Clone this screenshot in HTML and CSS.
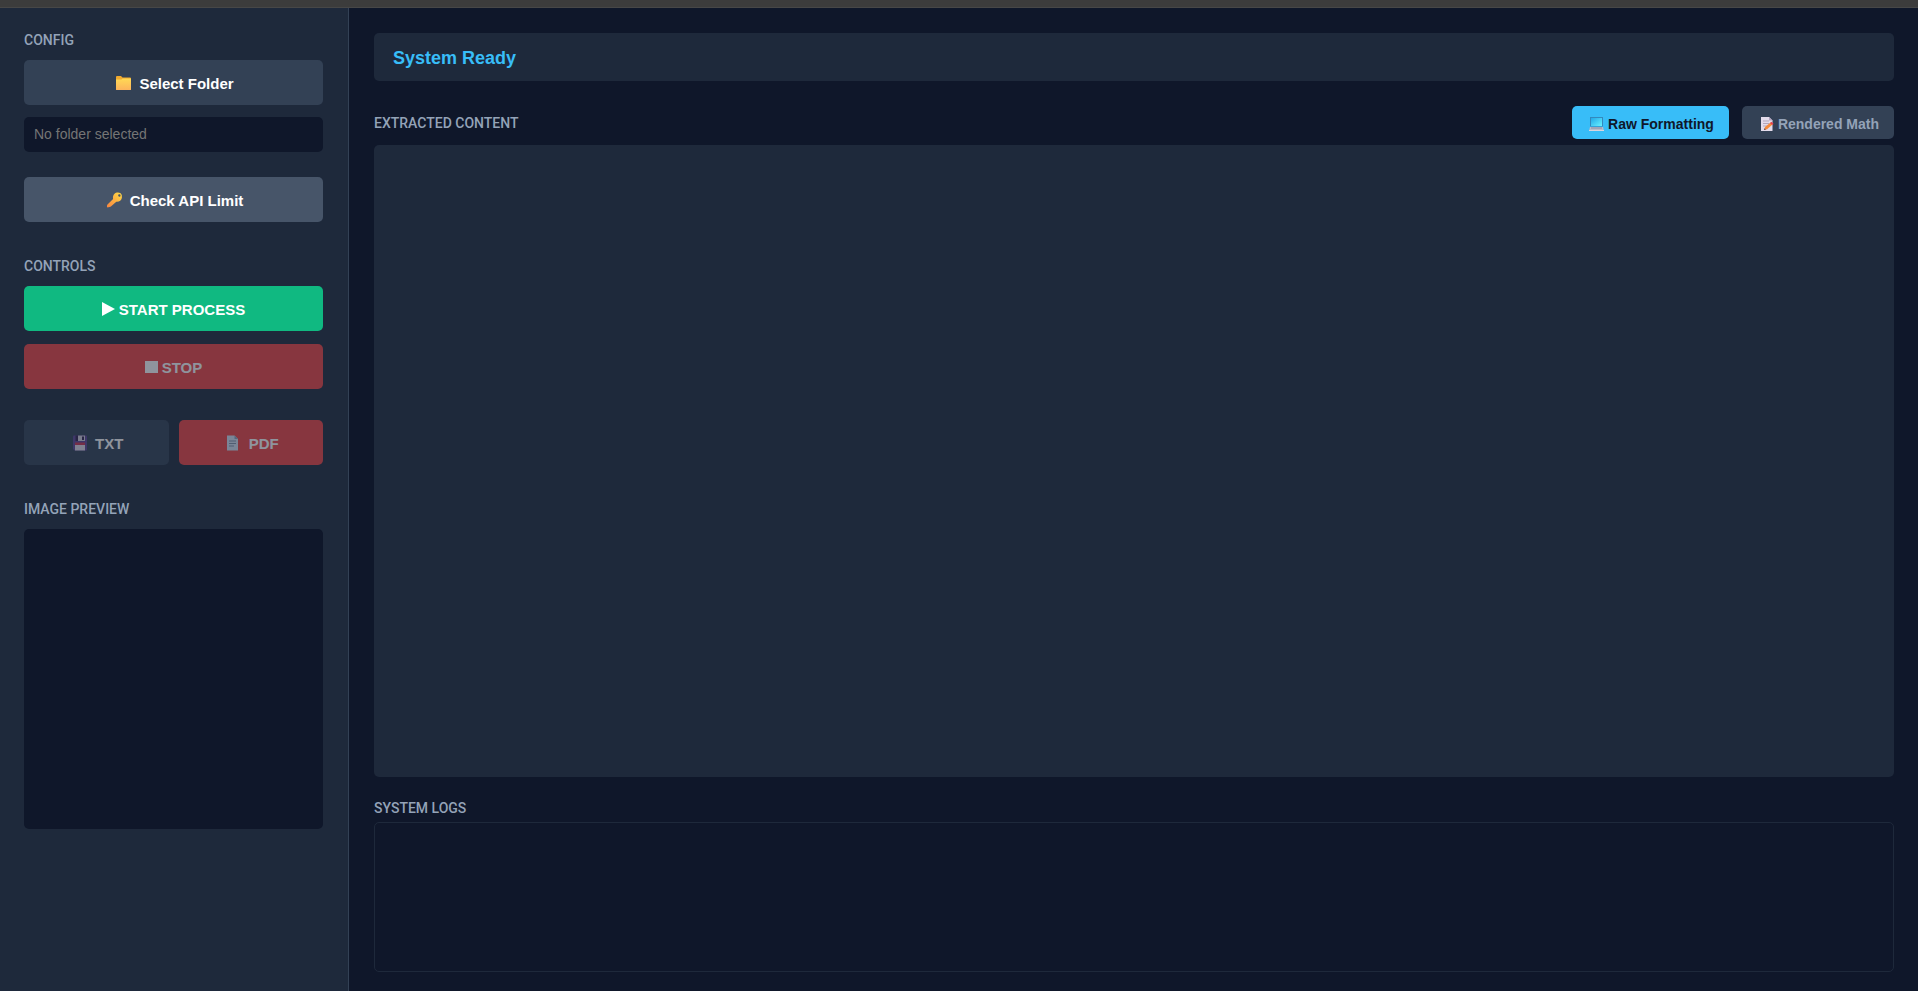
FILE: index.html
```html
<!DOCTYPE html>
<html lang="en">
<head>
    <meta charset="UTF-8">
    <meta name="viewport" content="width=device-width, initial-scale=1.0">
    <title>Text Extractor</title>
    <link rel="stylesheet" href="styles.css">
</head>
<body>
    <div class="top-strip"></div>
    <div class="app">
        <aside class="sidebar">
            <section class="group">
                <label class="label" for="folderPath">CONFIG</label>
                <button type="button" class="btn btn-folder">
                    <svg class="icon" viewBox="0 0 22 16" aria-hidden="true">
                        <defs>
                            <linearGradient id="folderFill" x1="0" y1="0" x2="0" y2="1">
                                <stop offset="0" stop-color="#ffd954"/>
                                <stop offset="1" stop-color="#fcb35c"/>
                            </linearGradient>
                        </defs>
                        <path d="M3 2a1 1 0 0 1 1-1h4l1.500 1.500H17a1 1 0 0 1 1 1V8H3z" fill="#f0a92f"/>
                        <path d="M3 4.500h5.500l1-1H18v11a.6.6 0 0 1-.6.6H3.600a.6.6 0 0 1-.6-.6z" fill="url(#folderFill)"/>
                    </svg>
                    Select Folder
                </button>
                <input type="text" id="folderPath" class="path-input" placeholder="No folder selected" readonly>
                <button type="button" class="btn btn-check">
                    <svg class="icon" viewBox="0 0 22 16" aria-hidden="true">
                        <defs>
                            <linearGradient id="keyFill" x1="1" y1="0" x2="0" y2="1">
                                <stop offset="0" stop-color="#ffdc45"/>
                                <stop offset="1" stop-color="#f9843f"/>
                            </linearGradient>
                        </defs>
                        <path fill-rule="evenodd" d="M13 .5a5 5 0 0 1 3.600.8 4.200 4.200 0 0 1 1.300 4.500c-.6 2.700-2.700 4.200-5.600 3.900L6.900 14.500c-.5.5-3.400 1.200-3.700.8-.4-.5-.2-2.200.3-2.700L9.100 7C8.500 3.800 10 1.200 13 .5zM15.300 2.300a1.200 1.200 0 1 0 .1 2.400 1.200 1.200 0 0 0-.1-2.400z" fill="url(#keyFill)"/>
                    </svg>
                    Check API Limit
                </button>
            </section>

            <section class="group">
                <h2 class="label">CONTROLS</h2>
                <button type="button" class="btn btn-start">
                    <svg class="icon-small" viewBox="0 0 13 14" aria-hidden="true">
                        <path d="M0 0l13 7-13 7z" fill="currentColor"/>
                    </svg>
                    START PROCESS
                </button>
                <button type="button" class="btn btn-stop" disabled>
                    <svg class="icon-small" viewBox="0 0 13 14" aria-hidden="true">
                        <path d="M0 1h13v12H0z" fill="currentColor"/>
                    </svg>
                    STOP
                </button>
                <div class="export-row">
                    <button type="button" class="btn btn-txt" disabled>
                        <svg class="icon" viewBox="0 0 22 16" aria-hidden="true">
                            <path d="M4 1.500a1 1 0 0 1 1-1h12a1 1 0 0 1 1 1v13a1 1 0 0 1-1 1H5.500L4 14z" fill="#5f4597"/>
                            <path d="M6.500.5H16V6H6.500z" fill="#32224f"/>
                            <path d="M9 .5h7V6H9z" fill="#d3cfdd"/>
                            <path d="M13 1.500h2v3.500h-2z" fill="#32224f"/>
                            <path d="M6 9h10v6.500H6z" fill="#e1d8e7"/>
                            <path d="M6 7.500h10V10H6z" fill="#cb3454"/>
                        </svg>
                        TXT
                    </button>
                    <button type="button" class="btn btn-pdf" disabled>
                        <svg class="icon" viewBox="0 0 22 16" aria-hidden="true">
                            <path d="M4 .5h7.500L15 4v11.500H4z" fill="#d5e1f3"/>
                            <path d="M11.500.5L15 4h-3.500z" fill="#8da3bf"/>
                            <path d="M6 6h7M6 8.500h7M6 11h5" stroke="#8391aa" fill="none"/>
                        </svg>
                        PDF
                    </button>
                </div>
            </section>

            <section class="group">
                <h2 class="label">IMAGE PREVIEW</h2>
                <div class="preview"></div>
            </section>
        </aside>

        <main class="main">
            <div class="status">System Ready</div>

            <div class="content-header">
                <h2 class="label">EXTRACTED CONTENT</h2>
                <div class="tabs">
                    <button type="button" class="tab active">
                        <svg class="icon-tab" viewBox="0 0 18 16" aria-hidden="true">
                            <defs>
                                <linearGradient id="screenFill" x1="0" y1="0" x2="1" y2="1">
                                    <stop offset="0" stop-color="#22a9e8"/>
                                    <stop offset="1" stop-color="#69f1ff"/>
                                </linearGradient>
                            </defs>
                            <path d="M3 1h13v9.500H3z" fill="#3389bd"/>
                            <path d="M4 2h11v8H4z" fill="url(#screenFill)"/>
                            <path d="M3 11h13l1 4H2z" fill="#b9bbc9"/>
                            <path d="M4 12h11" stroke="#878da4" fill="none"/>
                            <path d="M2 14.500h15" stroke="#d9d5df" fill="none"/>
                        </svg>
                        Raw Formatting
                    </button>
                    <button type="button" class="tab">
                        <svg class="icon-tab" viewBox="0 0 18 16" aria-hidden="true">
                            <path d="M4 1h8l3.500 3.500V15H4z" fill="#e4dceb"/>
                            <path d="M12 1l3.500 3.500H12z" fill="#b5a6c2"/>
                            <path d="M6 5h6M6 7.500h6M6 10h4" stroke="#b3a7bd" fill="none"/>
                            <path d="M7 14l1-3 5.500-4.500 2 2-5.500 4.800z" fill="#f58a3b"/>
                            <path d="M13 7l1.500-1.200 2 2L15.200 9z" fill="#e6424f"/>
                            <path d="M7 14l.6-1.800 1.300 1.300z" fill="#4a3b4d"/>
                        </svg>
                        Rendered Math
                    </button>
                </div>
            </div>
            <div class="content-box"></div>

            <h2 class="label logs-label">SYSTEM LOGS</h2>
            <div class="logs"></div>
        </main>
    </div>
</body>
</html>
```
FILE: styles.css
```css
* {
    margin: 0;
    padding: 0;
    box-sizing: border-box;
}

body {
    font-family: "Liberation Sans", Arial, sans-serif;
    background-color: #0f172a;
    color: #fff;
    display: flex;
    flex-direction: column;
    height: 100vh;
}

.top-strip {
    height: 8px;
    flex-shrink: 0;
    background-color: #3c3c3c;
    border-bottom: 1px solid #474747;
}

.app {
    flex: 1;
    display: flex;
    min-height: 0;
}

.sidebar {
    width: 349px;
    flex-shrink: 0;
    padding: 24px 25px 24px 24px;
    background-color: #1e293b;
    border-right: 1px solid #334155;
    display: flex;
    flex-direction: column;
    gap: 36px;
    overflow-y: auto;
}

.group {
    display: flex;
    flex-direction: column;
}

.label {
    display: block;
    font-family: Roboto, sans-serif;
    font-size: 14px;
    font-weight: 500;
    line-height: 16px;
    color: #94a3b8;
}

.group .label {
    margin-bottom: 12px;
}

/* Buttons */
.btn {
    height: 45px;
    width: 100%;
    padding-top: 1px;
    border: none;
    border-radius: 5px;
    font-family: inherit;
    font-size: 15px;
    font-weight: bold;
    color: #fff;
    display: flex;
    align-items: center;
    justify-content: center;
    gap: 4px;
    cursor: pointer;
}

.btn:disabled {
    opacity: 0.5;
    cursor: not-allowed;
}

.btn-folder,
.btn-txt {
    background-color: #334155;
}

.btn-check {
    background-color: #475569;
}

.btn-start {
    background-color: #10b981;
    margin-bottom: 13px;
}

.btn-stop,
.btn-pdf {
    background-color: #ef4444;
}

.icon {
    width: 22px;
    height: 16px;
}

.icon-small {
    width: 13px;
    height: 14px;
}

.path-input {
    width: 100%;
    height: 35px;
    margin: 12px 0 25px;
    padding: 0 10px 2px;
    border: none;
    border-radius: 5px;
    background-color: #0f172a;
    color: #fff;
    font-family: inherit;
    font-size: 14px;
}

.path-input::placeholder {
    color: #757575;
}

.export-row {
    display: flex;
    gap: 10px;
    margin-top: 31px;
}

.preview {
    height: 300px;
    border-radius: 5px;
    background-color: #0f172a;
}

/* Main area */
.main {
    flex: 1;
    min-width: 0;
    padding: 25px 24px 19px 25px;
    display: flex;
    flex-direction: column;
}

.status {
    padding: 15px 19px 13px;
    border-radius: 5px;
    background-color: #1e293b;
    color: #38bdf8;
    font-size: 18px;
    font-weight: bold;
    line-height: 20px;
}

.content-header {
    display: flex;
    align-items: center;
    justify-content: space-between;
    margin: 25px 0 6px;
}

.tabs {
    display: flex;
    gap: 13px;
}

.tab {
    height: 33px;
    padding: 2px 15px 0;
    border: none;
    border-radius: 5px;
    background-color: #334155;
    color: #94a3b8;
    font-family: inherit;
    font-size: 14px;
    font-weight: bold;
    display: flex;
    align-items: center;
    gap: 3px;
    cursor: pointer;
}

.tab.active {
    background-color: #38bdf8;
    color: #0f172a;
}

.icon-tab {
    width: 18px;
    height: 16px;
}

.content-box {
    flex: 1;
    border-radius: 5px;
    background-color: #1e293b;
    overflow-y: auto;
}

.logs-label {
    margin: 23px 0 6px;
}

.logs {
    height: 150px;
    flex-shrink: 0;
    border: 1px solid #1e293b;
    border-radius: 5px;
    overflow-y: auto;
}
```
